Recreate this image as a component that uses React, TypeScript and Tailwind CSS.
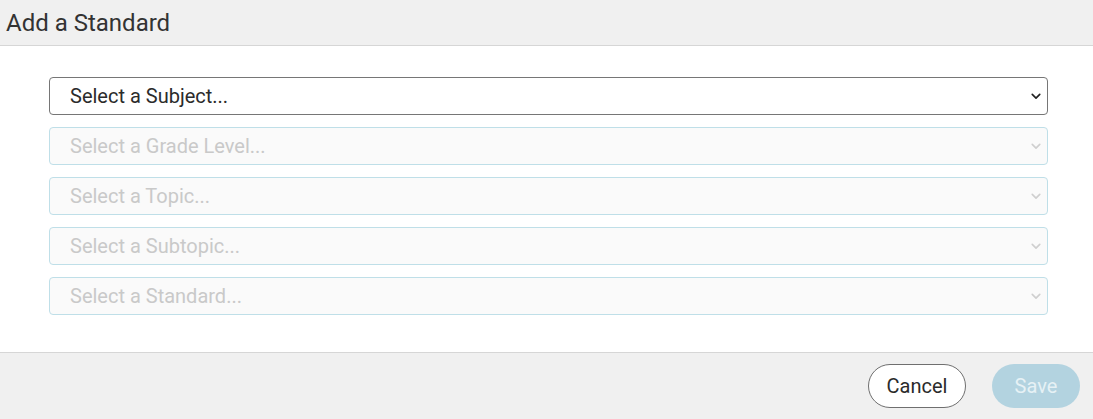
import React from 'react';

const Chevron = ({ className }: { className: string }) => (
  <svg viewBox="0 0 12 8" className={className} fill="none" stroke="currentColor" strokeWidth="2" strokeLinecap="round" strokeLinejoin="round">
    <path d="M1.5 1.5 6 6l4.5-4.5" />
  </svg>
);

const FakeSelect = ({ label, disabled }: { label: string; disabled?: boolean }) => (
  <div
    className={
      disabled
        ? 'h-[38px] flex items-center justify-between pl-5 pr-[6px] rounded-[4px] border border-[#bfdfe8] bg-[#fafafa] text-[#c9c9c9]'
        : 'h-[38px] flex items-center justify-between pl-5 pr-[6px] rounded-[4px] border border-[#767676] bg-white text-[#2b2b2b]'
    }
  >
    <span className="text-[20px] leading-none">{label}</span>
    <Chevron className={disabled ? 'w-[10px] h-[7px] text-[#cfcfcf]' : 'w-[10px] h-[7px] text-[#222]'} />
  </div>
);

export default function App() {
  return (
    <div className="w-[1093px] h-[419px] bg-white flex flex-col font-['Roboto',sans-serif]">
      <div className="h-[46px] shrink-0 bg-[#f0f0f0] border-b border-[#d6d6d6] flex items-center px-[6px]">
        <h2 className="text-[24px] text-[#333] leading-none">Add a Standard</h2>
      </div>
      <div className="flex-1 pt-[31px] pl-[49px] pr-[45px] flex flex-col gap-3">
        <FakeSelect label="Select a Subject..." />
        <FakeSelect label="Select a Grade Level..." disabled />
        <FakeSelect label="Select a Topic..." disabled />
        <FakeSelect label="Select a Subtopic..." disabled />
        <FakeSelect label="Select a Standard..." disabled />
      </div>
      <div className="h-[67px] shrink-0 bg-[#f0f0f0] border-t border-[#d6d6d6] flex items-center justify-end gap-[26px] pr-[13px]">
        <button className="w-[98px] h-[44px] rounded-full border border-[#6f6f6f] bg-white text-[20px] text-[#2b2b2b]">Cancel</button>
        <button className="w-[88px] h-[44px] rounded-full bg-[#b3d3e0] text-[20px] text-[#e6f1f5]">Save</button>
      </div>
    </div>
  );
}
